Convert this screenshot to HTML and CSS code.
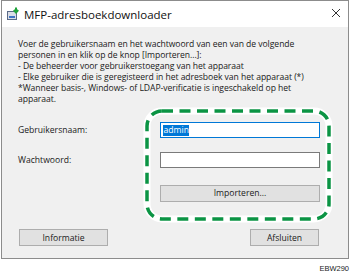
FILE: index.html
```html
<!DOCTYPE html>
<html>
<head>
<meta charset="utf-8">
<link rel="stylesheet" href="styles.css">
</head>
<body>
<div class="window">
  <div class="titlebar">
    <svg class="appicon" width="13" height="13" viewBox="0 0 13 13">
      <rect x="0.5" y="4.5" width="9" height="8" fill="#d9dde6" stroke="#5a6a86"/>
      <rect x="2" y="9" width="6" height="2" fill="#3f74c4"/>
      <path d="M9 0.5 V5 M6.8 3 L9 5.5 L11.2 3" stroke="#1fa33a" stroke-width="2" fill="none"/>
    </svg>
    <span class="title">MFP-adresboekdownloader</span>
    <svg class="close" width="10" height="10" viewBox="0 0 10 10">
      <path d="M1 1 L9 9 M9 1 L1 9" stroke="#333" stroke-width="1"/>
    </svg>
  </div>
  <div class="content">
    <p class="intro">Voer de gebruikersnaam en het wachtwoord van een van de volgende personen in en klik op de knop [Importeren...]:<br>- De beheerder voor gebruikerstoegang van het apparaat<br>- Elke gebruiker die is geregisteerd in het adresboek van het apparaat (*)<br>*Wanneer basis-, Windows- of LDAP-verificatie is ingeschakeld op het apparaat.</p>
    <div class="form">
      <label class="label">Gebruikersnaam:</label>
      <div class="input focused"><span class="sel">admin</span></div>
      <label class="label">Wachtwoord:</label>
      <div class="input"></div>
      <div></div>
      <div class="btn wide">Importeren...</div>
      <svg class="highlight" width="192" height="118" viewBox="0 0 192 118">
        <rect x="5" y="5" width="182" height="108" rx="15" fill="none" stroke="#fff" stroke-width="7"/>
        <rect x="5" y="5" width="182" height="108" rx="15" fill="none" stroke="#0b9444" stroke-width="3.5" stroke-dasharray="11 6.5"/>
      </svg>
    </div>
    <div class="footer">
      <div class="btn info">Informatie</div>
      <div class="btn close-btn">Afsluiten</div>
    </div>
  </div>
</div>
<div class="code">EBW290</div>
</body>
</html>
```
FILE: styles.css
```css
html, body {
  margin: 0;
  padding: 0;
  background: #fff;
}
body {
  width: 350px;
  height: 276px;
  font-family: "Open Sans", "Noto Sans", sans-serif;
  color: #1a1a1a;
}
.window {
  margin-left: 1px;
  width: 346px;
  height: 257px;
  border: 1px solid #8c8c8c;
  display: flex;
  flex-direction: column;
}
.titlebar {
  height: 26px;
  background: #fff;
  display: flex;
  align-items: center;
  padding-left: 5px;
  padding-right: 7px;
}
.appicon {
  margin-top: -1px;
}
.title {
  font-size: 11.5px;
  margin-left: 4px;
  flex: 1;
  color: #111;
}
.close {
  margin-top: -2px;
}
.content {
  flex: 1;
  background: #f0f0f0;
  padding: 12px 0 0 16px;
  display: flex;
  flex-direction: column;
}
.intro {
  margin: 0;
  font-size: 8.6px;
  line-height: 11px;
  width: 300px;
  letter-spacing: -0.05px;
}
.form {
  position: relative;
  margin-top: 17px;
  display: grid;
  grid-template-columns: 142px 160px;
  grid-template-rows: 16px 16px 17px;
  row-gap: 14px;
  align-items: center;
}
.form .btn.wide {
  margin-top: 5px;
}
.label {
  font-size: 8.6px;
}
.input {
  height: 14px;
  border: 1px solid #7a7a7a;
  background: #fff;
  display: flex;
  align-items: center;
  padding-left: 2px;
}
.input.focused {
  border-color: #0078d7;
}
.sel {
  background: #0078d7;
  color: #fff;
  font-size: 8.6px;
  line-height: 11px;
  padding: 0 0.5px;
}
.btn {
  height: 15px;
  border: 1px solid #adadad;
  background: #e1e1e1;
  font-size: 8.6px;
  display: flex;
  align-items: center;
  justify-content: center;
}
.highlight {
  position: absolute;
  left: 124px;
  top: -16px;
}
.footer {
  margin-top: 30px;
  display: flex;
  justify-content: space-between;
  padding-left: 1px;
  padding-right: 29px;
}
.btn.info {
  width: 87px;
}
.btn.close-btn {
  width: 67px;
}
.code {
  text-align: right;
  font-size: 7.5px;
  padding-right: 1px;
  margin-top: 5px;
  color: #222;
  font-family: "Liberation Sans", sans-serif;
}
```
